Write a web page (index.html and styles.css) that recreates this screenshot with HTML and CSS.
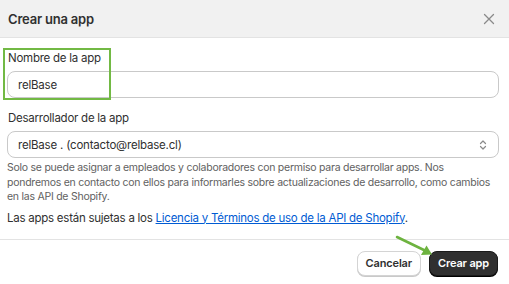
FILE: index.html
```html
<!DOCTYPE html>
<html lang="es">
<head>
<meta charset="utf-8">
<link rel="stylesheet" href="styles.css">
</head>
<body>
<div class="modal">
  <div class="header">
    <h1 class="title">Crear una app</h1>
    <svg class="close" width="12" height="12" viewBox="0 0 12 12"><path d="M1.5 1.5 L10.5 10.5 M10.5 1.5 L1.5 10.5" stroke="#8a8a8a" stroke-width="1.3" stroke-linecap="round"/></svg>
  </div>
  <div class="body">
    <div class="field">
      <label class="label">Nombre de la app</label>
      <div class="input">relBase</div>
      <div class="highlight"></div>
    </div>
    <div class="field last">
      <label class="label">Desarrollador de la app</label>
      <div class="input select">
        <span>relBase . (contacto@relbase.cl)</span>
        <svg width="10" height="14" viewBox="0 0 10 14"><path d="M2.5 5.5 L5 3 L7.5 5.5 M2.5 8.5 L5 11 L7.5 8.5" fill="none" stroke="#8a8a8a" stroke-width="1.2" stroke-linecap="round" stroke-linejoin="round"/></svg>
      </div>
      <p class="help">Solo se puede asignar a empleados y colaboradores con permiso para desarrollar apps. Nos pondremos en contacto con ellos para informarles sobre actualizaciones de desarrollo, como cambios en las API de Shopify.</p>
    </div>
    <p class="terms">Las apps están sujetas a los <a href="#">Licencia y Términos de uso de la API de Shopify</a>.</p>
  </div>
  <div class="footer">
    <button class="btn">Cancelar</button>
    <button class="btn primary">Crear app</button>
    <svg class="arrow" width="40" height="22" viewBox="0 0 40 22"><path d="M2 2 L32 16.5" stroke="#6db33f" stroke-width="2.5" stroke-linecap="round"/><path d="M37 19.5 L26 20 L31.5 10.5 Z" fill="#6db33f"/></svg>
  </div>
</div>
</body>
</html>
```
FILE: styles.css
```css
* { box-sizing: border-box; }
html, body { margin: 0; padding: 0; background: #fff; }
body { font-family: Inter, "Noto Sans", sans-serif; color: #303030; width: 509px; height: 284px; overflow: hidden; }
.modal { display: flex; flex-direction: column; }
.header { height: 38px; background: #f1f1f1; border-bottom: 1px solid #e3e3e3; display: flex; align-items: center; justify-content: space-between; padding: 0 14px 0 8px; }
.title { margin: 0; font-size: 13px; font-weight: 600; color: #303030; letter-spacing: -0.2px; }
.close { display: block; }
.body { padding: 12px 10px 0 7px; }
.field { position: relative; display: flex; flex-direction: column; margin-bottom: 12px; }
.field.last { margin-bottom: 6px; }
.label { font-size: 11.5px; letter-spacing: -0.25px; line-height: 16px; color: #303030; padding-left: 1px; margin-bottom: 5px; }
.input { height: 27px; border: 1px solid #c9c9c9; border-radius: 8px; padding: 0 10px; font-size: 11.5px; letter-spacing: -0.2px; display: flex; align-items: center; color: #303030; }
.select { justify-content: space-between; }
.highlight { position: absolute; left: -4px; top: -2px; width: 108px; height: 52px; border: 2px solid #72b944; }
.help { margin: 3px 0 0; font-size: 10.5px; letter-spacing: -0.25px; line-height: 14.5px; color: #616161; }
.terms { margin: 0; font-size: 11.5px; letter-spacing: -0.25px; line-height: 14px; color: #303030; }
.terms a { color: #005bd3; text-decoration: underline; }
.footer { position: relative; margin-top: 14px; border-top: 1px solid #e3e3e3; display: flex; justify-content: flex-end; gap: 8px; padding: 11px 11px 0 0; }
.btn { font-family: inherit; font-size: 11px; letter-spacing: -0.15px; font-weight: 600; height: 25px; padding: 0 8px; border-radius: 8px; border: 1px solid #d4d4d4; background: #fff; color: #303030; box-shadow: 0 1px 0 #c9c9c9; }
.primary { background: #303030; color: #fff; border-color: #1a1a1a; box-shadow: 0 1px 0 #000; }
.arrow { position: absolute; left: 395px; top: -5px; }
```
